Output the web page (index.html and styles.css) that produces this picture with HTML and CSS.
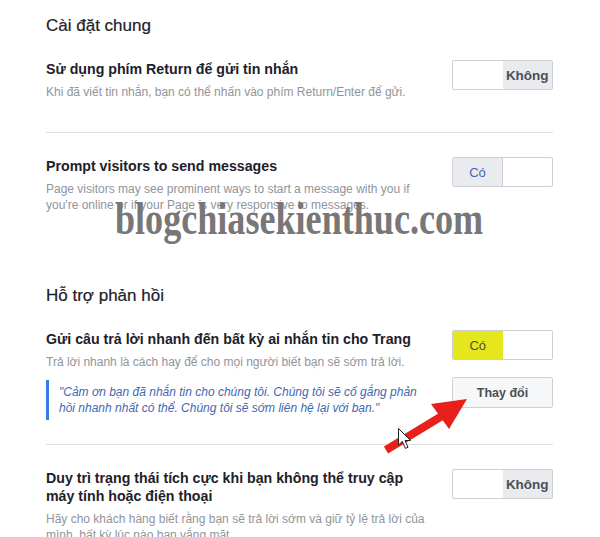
FILE: index.html
```html
<!DOCTYPE html>
<html lang="vi">
<head>
<meta charset="utf-8">
<link rel="stylesheet" href="styles.css">
</head>
<body>
<div class="page">
  <section class="section">
    <h2 class="heading">Cài đặt chung</h2>
    <div class="row row-divided">
      <div class="text">
        <div class="title">Sử dụng phím Return để gửi tin nhắn</div>
        <div class="desc">Khi đã viết tin nhắn, bạn có thể nhấn vào phím Return/Enter để gửi.</div>
      </div>
      <div class="controls">
        <div class="toggle">
          <span class="seg"></span>
          <span class="seg seg-on seg-no">Không</span>
        </div>
      </div>
    </div>
    <div class="row row-second">
      <div class="text">
        <div class="title">Prompt visitors to send messages</div>
        <div class="desc">Page visitors may see prominent ways to start a message with you if you're online or if your Page is very responsive to messages.</div>
      </div>
      <div class="controls">
        <div class="toggle">
          <span class="seg seg-on seg-yes">Có</span>
          <span class="seg"></span>
        </div>
      </div>
    </div>
  </section>

  <section class="section section-2">
    <h2 class="heading">Hỗ trợ phản hồi</h2>
    <div class="row row-divided row-third">
      <div class="text">
        <div class="title">Gửi câu trả lời nhanh đến bất kỳ ai nhắn tin cho Trang</div>
        <div class="desc">Trả lời nhanh là cách hay để cho mọi người biết bạn sẽ sớm trả lời.</div>
        <blockquote class="quote">"Cảm ơn bạn đã nhắn tin cho chúng tôi. Chúng tôi sẽ cố gắng phản hồi nhanh nhất có thể. Chúng tôi sẽ sớm liên hệ lại với bạn."</blockquote>
      </div>
      <div class="controls">
        <div class="toggle">
          <span class="seg seg-on seg-hl">Có</span>
          <span class="seg"></span>
        </div>
        <button class="btn">Thay đổi</button>
      </div>
    </div>
    <div class="row row-fourth">
      <div class="text">
        <div class="title title-wrap">Duy trì trạng thái tích cực khi bạn không thể truy cập máy tính hoặc điện thoại</div>
        <div class="desc">Hãy cho khách hàng biết rằng bạn sẽ trả lời sớm và giữ tỷ lệ trả lời của mình, bất kỳ lúc nào bạn vắng mặt.</div>
      </div>
      <div class="controls">
        <div class="toggle">
          <span class="seg"></span>
          <span class="seg seg-on seg-no">Không</span>
        </div>
      </div>
    </div>
  </section>
</div>

<div class="watermark">blogchiasekienthuc.com</div>

<svg class="annot" width="600" height="537" viewBox="0 0 600 537">
  <line x1="386" y1="450" x2="442" y2="416" stroke="#e8201c" stroke-width="8" stroke-linecap="butt"/>
  <polygon points="467,399 431,404 449,429" fill="#e8201c"/>
  <path d="M398.5 428.5 L398.5 445 L402.3 441.4 L405.4 448.4 L408 447.3 L405 440.5 L410.5 440.5 Z" fill="#fff" stroke="#222" stroke-width="1"/>
</svg>
</body>
</html>
```

FILE: styles.css
```css
* { box-sizing: border-box; }
html, body { margin: 0; padding: 0; background: #fff; }
body {
  width: 600px;
  height: 537px;
  overflow: hidden;
  position: relative;
  font-family: "Liberation Sans", Arial, sans-serif;
  color: #1d2129;
}
.page {
  padding: 16px 47px 0 46px;
}
.heading {
  margin: 0;
  font-size: 17px;
  line-height: 20px;
  font-weight: normal;
  color: #1d2129;
  -webkit-text-stroke: 0.2px #1d2129;
}
.row {
  display: flex;
  justify-content: space-between;
  align-items: flex-start;
}
.section > .row:first-of-type { margin-top: 24px; }
.row-divided {
  border-bottom: 1px solid #dddfe2;
  padding-bottom: 32px;
}
.row-second { padding-top: 24px; }
.section-2 { margin-top: 73px; }
.row-third { padding-bottom: 24px; }
.row-fourth { padding-top: 24px; }
.text { width: 380px; }
.title {
  font-size: 14.2px;
  line-height: 18px;
  font-weight: bold;
  color: #1d2129;
}
.title-wrap { width: 360px; }
.desc {
  margin-top: 6px;
  font-size: 12px;
  line-height: 16px;
  color: #90949c;
}
.quote {
  margin: 10px 0 0 0;
  padding: 4px 0 4px 10px;
  border-left: 3px solid #3b7be6;
  font-size: 12px;
  line-height: 16px;
  font-style: italic;
  color: #4267b2;
}
.controls {
  width: 101px;
  display: flex;
  flex-direction: column;
  gap: 17px;
}
.toggle {
  display: flex;
  height: 30px;
  border: 1px solid #ccd0d5;
  border-radius: 2px;
  overflow: hidden;
  background: #fff;
}
.seg {
  flex: 1;
  display: flex;
  align-items: center;
  justify-content: center;
  font-size: 13px;
}
.seg-on { background: #e9ebee; }
.seg-no { font-weight: bold; font-size: 13.5px; color: #4b4f56; }
.seg-yes { color: #4267b2; border-right: 1px solid #ccd0d5; }
.seg-hl {
  background: #e6e61c;
  color: #4a5530;
}
.btn {
  height: 31px;
  border: 1px solid #ced0d4;
  border-radius: 2px;
  background: #f6f7f9;
  font-family: "Liberation Sans", Arial, sans-serif;
  font-size: 12.5px;
  font-weight: bold;
  color: #4b4f56;
  padding: 0;
}
.watermark {
  position: absolute;
  left: 115px;
  top: 196px;
  font-family: "Liberation Serif", serif;
  font-weight: bold;
  font-size: 46px;
  line-height: 46px;
  color: #777;
  transform: scaleX(0.785);
  transform-origin: left top;
  white-space: nowrap;
}
.annot {
  position: absolute;
  left: 0;
  top: 0;
  pointer-events: none;
}
```
